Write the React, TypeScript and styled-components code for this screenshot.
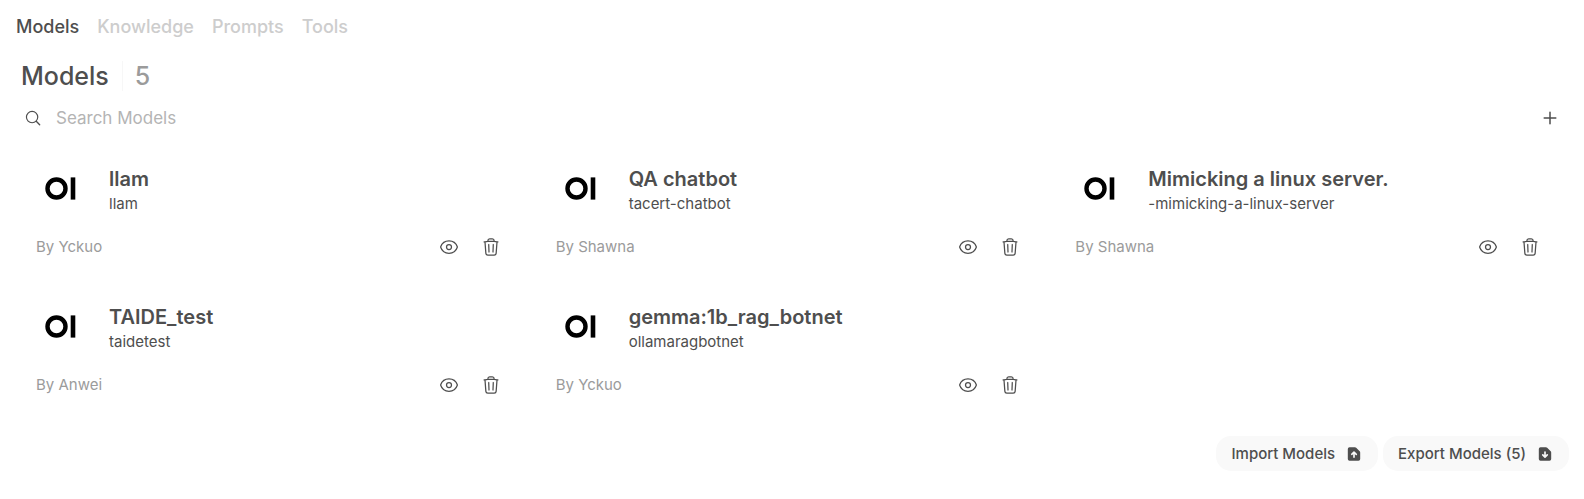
import React from "react";
import styled, { createGlobalStyle } from "styled-components";

const GlobalStyle = createGlobalStyle`
  *, *::before, *::after { box-sizing: border-box; }
  body {
    margin: 0;
    background: #fff;
    color: #4e4e4e;
    font-family: Inter, "Liberation Sans", sans-serif;
  }
  button, input { font: inherit; color: inherit; }
  h1, h2, p, ul { margin: 0; padding: 0; }
`;

const Page = styled.div`
  padding: 13px 14px 28px 16px;
`;

const Tabs = styled.nav`
  display: flex;
  gap: 18px;
`;

const Tab = styled.a<{ $active?: boolean }>`
  font-size: 18px;
  line-height: 28px;
  font-weight: 500;
  text-decoration: none;
  color: ${(p) => (p.$active ? "#4e4e4e" : "#cdcdcd")};
`;

const Main = styled.main`
  padding: 18px 0 0 5px;
`;

const Heading = styled.h1`
  display: flex;
  align-items: center;
  font-size: 25px;
  line-height: 34px;
  font-weight: 500;
`;

const Divider = styled.span`
  width: 1px;
  height: 30px;
  margin: 0 12px 0 13px;
  background: #f7f7f7;
`;

const Count = styled.span`
  color: #9b9b9b;
`;

const SearchRow = styled.div`
  display: flex;
  align-items: center;
  height: 32px;
  margin-top: 9px;
`;

const SearchLabel = styled.label`
  display: flex;
  flex: 1;
  align-items: center;
  gap: 14px;
  padding-left: 3px;
`;

const SearchInput = styled.input`
  flex: 1;
  min-width: 0;
  padding: 0;
  border: 0;
  outline: 0;
  background: transparent;
  font-size: 17px;
  line-height: 26px;
  &::placeholder { color: #b4b4b4; opacity: 1; }
`;

const IconButton = styled.button`
  display: flex;
  padding: 10px;
  border: 0;
  border-radius: 12px;
  background: transparent;
  cursor: pointer;
`;

const Grid = styled.ul`
  display: grid;
  grid-template-columns: repeat(auto-fill, minmax(400px, 1fr));
  gap: 10px;
  margin-top: 17px;
  list-style: none;
`;

const Card = styled.li`
  display: flex;
  flex-direction: column;
  justify-content: space-between;
  min-height: 128px;
  padding: 10px 15px 12px;
`;

const CardTop = styled.div`
  display: flex;
  align-items: flex-end;
  gap: 18px;
`;

const Avatar = styled.svg`
  flex: none;
  width: 55px;
  height: 55px;
`;

const Title = styled.h2`
  font-size: 20px;
  line-height: 25px;
  font-weight: 600;
`;

const ModelId = styled.p`
  font-size: 15px;
  line-height: 24px;
`;

const CardBottom = styled.div`
  display: flex;
  align-items: center;
  justify-content: space-between;
`;

const Author = styled.p`
  font-size: 15px;
  line-height: 20px;
  color: #9b9b9b;
`;

const Actions = styled.div`
  display: flex;
  gap: 2px;
  padding-right: 5px;
`;

const Footer = styled.footer`
  display: flex;
  justify-content: flex-end;
  gap: 5px;
  margin-top: 19px;
  padding-right: 1px;
`;

const PillButton = styled.button`
  display: flex;
  align-items: center;
  gap: 10px;
  padding: 7px 15px;
  border: 0;
  border-radius: 15px;
  background: #f9f9f9;
  font-size: 15px;
  line-height: 21px;
  font-weight: 500;
  cursor: pointer;
`;

const OutlineIcon = styled.svg<{ $size: number }>`
  flex: none;
  width: ${(p) => p.$size}px;
  height: ${(p) => p.$size}px;
  fill: none;
  stroke: currentColor;
  stroke-width: 1.5;
  stroke-linecap: round;
  stroke-linejoin: round;
`;

const SolidIcon = styled.svg`
  flex: none;
  width: 18px;
  height: 18px;
  fill: currentColor;
`;

const Logo = () => (
  <Avatar viewBox="0 0 55 55" aria-hidden="true">
    <circle cx="20.5" cy="27.5" r="9" fill="none" stroke="#000" strokeWidth="4.4" />
    <rect x="34.7" y="16.4" width="4.6" height="22.2" fill="#000" />
  </Avatar>
);

const Eye = () => (
  <OutlineIcon $size={20} viewBox="0 0 24 24" aria-hidden="true">
    <path d="M2.036 12.322a1.012 1.012 0 0 1 0-.639C3.423 7.51 7.36 4.5 12 4.5c4.638 0 8.573 3.007 9.963 7.178.07.207.07.431 0 .639C20.577 16.49 16.64 19.5 12 19.5c-4.638 0-8.573-3.007-9.963-7.178Z" />
    <path d="M15 12a3 3 0 1 1-6 0 3 3 0 0 1 6 0Z" />
  </OutlineIcon>
);

const Trash = () => (
  <OutlineIcon $size={20} viewBox="0 0 24 24" aria-hidden="true">
    <path d="m14.74 9-.346 9m-4.788 0L9.26 9m9.968-3.21c.342.052.682.107 1.022.166m-1.022-.165L18.16 19.673a2.25 2.25 0 0 1-2.244 2.077H8.084a2.25 2.25 0 0 1-2.244-2.077L4.772 5.79m14.456 0a48.108 48.108 0 0 0-3.478-.397m-12 .562c.34-.059.68-.114 1.022-.165m0 0a48.11 48.11 0 0 1 3.478-.397m7.5 0v-.916c0-1.18-.91-2.164-2.09-2.201a51.964 51.964 0 0 0-3.32 0c-1.18.037-2.09 1.022-2.09 2.201v.916m7.5 0a48.667 48.667 0 0 0-7.5 0" />
  </OutlineIcon>
);

const FILE =
  "M4 2a1.5 1.5 0 0 0-1.5 1.5v9A1.5 1.5 0 0 0 4 14h8a1.5 1.5 0 0 0 1.5-1.5V6.621a1.5 1.5 0 0 0-.44-1.06L9.94 2.439A1.5 1.5 0 0 0 8.878 2H4Z";
const ARROW_UP =
  "m4 9.5a.75.75 0 0 1-.75-.75V8.06l-.72.72a.75.75 0 0 1-1.06-1.06l2-2a.75.75 0 0 1 1.06 0l2 2a.75.75 0 1 1-1.06 1.06l-.72-.72v2.69a.75.75 0 0 1-.75.75Z";
const ARROW_DOWN =
  "m4 3.5a.75.75 0 0 1 .75.75v2.69l.72-.72a.75.75 0 1 1 1.06 1.06l-2 2a.75.75 0 0 1-1.06 0l-2-2a.75.75 0 0 1 1.06-1.06l.72.72V6.25A.75.75 0 0 1 8 5.5Z";

const FileIcon = ({ arrow }: { arrow: string }) => (
  <SolidIcon viewBox="0 0 16 16" aria-hidden="true">
    <path fillRule="evenodd" clipRule="evenodd" d={FILE + arrow} />
  </SolidIcon>
);

const tabs = ["Models", "Knowledge", "Prompts", "Tools"];

const models = [
  { name: "llam", id: "llam", author: "Yckuo" },
  { name: "QA chatbot", id: "tacert-chatbot", author: "Shawna" },
  { name: "Mimicking a linux server.", id: "-mimicking-a-linux-server", author: "Shawna" },
  { name: "TAIDE_test", id: "taidetest", author: "Anwei" },
  { name: "gemma:1b_rag_botnet", id: "ollamaragbotnet", author: "Yckuo" },
];

export default function App() {
  return (
    <>
      <GlobalStyle />
      <Page>
        <Tabs>
          {tabs.map((t, i) => (
            <Tab key={t} href={`#${t.toLowerCase()}`} $active={i === 0}>
              {t}
            </Tab>
          ))}
        </Tabs>
        <Main>
          <Heading>
            Models
            <Divider />
            <Count>{models.length}</Count>
          </Heading>
          <SearchRow>
            <SearchLabel>
              <OutlineIcon $size={18} viewBox="0 0 20 20" aria-hidden="true">
                <circle cx="9" cy="9" r="6.3" strokeWidth="1.3" />
                <path d="m13.6 13.6 3.8 3.8" />
              </OutlineIcon>
              <SearchInput type="text" placeholder="Search Models" aria-label="Search Models" />
            </SearchLabel>
            <IconButton type="button" aria-label="Create a model">
              <OutlineIcon $size={20} viewBox="0 0 20 20" aria-hidden="true">
                <path d="M10 4.2v11.6M4.2 10h11.6" />
              </OutlineIcon>
            </IconButton>
          </SearchRow>
          <Grid>
            {models.map((m) => (
              <Card key={m.name}>
                <CardTop>
                  <Logo />
                  <div>
                    <Title>{m.name}</Title>
                    <ModelId>{m.id}</ModelId>
                  </div>
                </CardTop>
                <CardBottom>
                  <Author>By {m.author}</Author>
                  <Actions>
                    <IconButton type="button" aria-label={`Hide ${m.name}`}>
                      <Eye />
                    </IconButton>
                    <IconButton type="button" aria-label={`Delete ${m.name}`}>
                      <Trash />
                    </IconButton>
                  </Actions>
                </CardBottom>
              </Card>
            ))}
          </Grid>
          <Footer>
            <PillButton type="button">
              Import Models
              <FileIcon arrow={ARROW_UP} />
            </PillButton>
            <PillButton type="button">
              Export Models ({models.length})
              <FileIcon arrow={ARROW_DOWN} />
            </PillButton>
          </Footer>
        </Main>
      </Page>
    </>
  );
}
